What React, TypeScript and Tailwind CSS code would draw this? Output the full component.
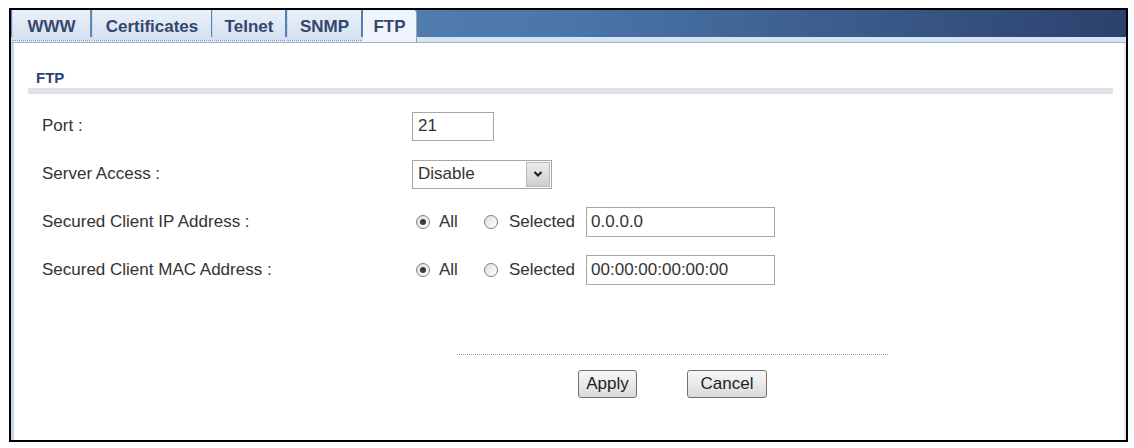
import { useState } from "react";

const tabs = ["WWW", "Certificates", "Telnet", "SNMP", "FTP"];
const tabWidths: Record<string, string> = {
  WWW: "w-[78px]",
  Certificates: "w-[119px]",
  Telnet: "w-[73px]",
  SNMP: "w-[74px]",
  FTP: "w-[54px]",
};

function Radio({ checked, onClick }: { checked: boolean; onClick: () => void }) {
  return (
    <span
      onClick={onClick}
      className="w-[14px] h-[14px] rounded-full border border-[#7f7f7f] bg-[linear-gradient(135deg,#dedede,#ffffff)] flex items-center justify-center cursor-pointer shrink-0"
    >
      {checked && <span className="w-[6px] h-[6px] rounded-full bg-[#3a3a3a]" />}
    </span>
  );
}

function AddressChoice({ value }: { value: string }) {
  const [all, setAll] = useState(true);
  return (
    <div className="flex items-center">
      <span className="ml-[4px] flex">
        <Radio checked={all} onClick={() => setAll(true)} />
      </span>
      <span className="ml-[9px]">All</span>
      <span className="ml-[26px] flex">
        <Radio checked={!all} onClick={() => setAll(false)} />
      </span>
      <span className="ml-[11px]">Selected</span>
      <input
        defaultValue={value}
        className="ml-[11px] w-[189px] h-[30px] border border-[#a6a6a6] px-[4px] outline-none text-[17px] text-[#333]"
      />
    </div>
  );
}

export default function App() {
  const [active] = useState("FTP");

  return (
    <main className="w-[1134px] h-[448px] bg-white pt-[8px] pl-[9px] font-['Liberation_Sans',Arial,sans-serif] text-[17px] text-[#333]">
      <div className="w-[1119px] h-[434px] border-2 border-black flex flex-col">
        {/* ===== tab bar ===== */}
        <div className="h-[33px] flex items-start pl-[1px] border-b border-[#a3b5cb] bg-[linear-gradient(to_bottom,transparent_27px,#d6e4f3_27px),linear-gradient(to_right,#5f8bbd,#4a76aa_50%,#2c416d)]">
          {tabs.map((t) => (
            <div
              key={t}
              className={
                t === active
                  ? `${tabWidths[t]} h-[32px] ml-[2px] bg-[#eef4fb] border-r border-dotted border-[#555] rounded-tr-[3px] flex items-start pt-[4px] justify-center font-bold text-[#34466f]`
                  : `${tabWidths[t]} h-[31px] ${t === "Telnet" ? "ml-[1px]" : t === "WWW" ? "" : "ml-[2px]"} bg-[linear-gradient(#eaf1f9,#d3e0ef)] border-l border-[#b9c9dc] border-b border-b-[#8797b2] border-dotted flex items-start pt-[4px] justify-center font-bold text-[#34466f]`
              }
            >
              {t}
            </div>
          ))}
        </div>

        {/* ===== content ===== */}
        <div className="flex-1 border-l-[3px] border-[#c6d6ea] border-r-[2px] border-r-[#dfe8f2] pl-[14px] pr-[11px]">
          <div className="pt-[26px] ml-[8px] text-[15px] leading-[17px] font-bold text-[#2f4476]">
            FTP
          </div>
          <div className="mt-[2px] h-[6px] bg-[#e1e1ea]" />

          <div className="mt-[8px] ml-[14px]">
            <div className="h-[48px] flex items-center">
              <div className="w-[370px]">Port :</div>
              <input
                defaultValue="21"
                className="w-[82px] h-[29px] border border-[#a6a6a6] px-[5px] outline-none text-[17px] text-[#333]"
              />
            </div>

            <div className="h-[48px] flex items-center">
              <div className="w-[370px]">Server Access :</div>
              <div className="w-[140px] h-[29px] border border-[#a6a6a6] flex items-stretch">
                <span className="flex-1 pl-[5px] flex items-center">Disable</span>
                <span className="w-[24px] my-[1px] mr-[1px] border border-[#b8b8b8] bg-[linear-gradient(#ececec,#cfcfcf)] flex items-center justify-center">
                  <svg width="10" height="8" viewBox="0 0 10 8">
                    <path d="M1.5 2 L5 5.5 L8.5 2" fill="none" stroke="#222" strokeWidth="2.2" />
                  </svg>
                </span>
              </div>
            </div>

            <div className="h-[48px] flex items-center">
              <div className="w-[370px]">Secured Client IP Address :</div>
              <AddressChoice value="0.0.0.0" />
            </div>

            <div className="h-[48px] flex items-center">
              <div className="w-[370px]">Secured Client MAC Address :</div>
              <AddressChoice value="00:00:00:00:00:00" />
            </div>
          </div>

          {/* ===== actions ===== */}
          <div className="mt-[60px] ml-[429px] w-[431px]">
            <div className="border-t border-dotted border-[#9a9a9a]" />
            <div className="mt-[15px] flex justify-center gap-[50px]">
              <button className="w-[59px] h-[28px] border border-[#707070] rounded-[3px] bg-[linear-gradient(#f8f8f8,#dadada)] text-[#222]">
                Apply
              </button>
              <button className="w-[80px] h-[28px] border border-[#707070] rounded-[3px] bg-[linear-gradient(#f8f8f8,#dadada)] text-[#222]">
                Cancel
              </button>
            </div>
          </div>
        </div>
      </div>
    </main>
  );
}
